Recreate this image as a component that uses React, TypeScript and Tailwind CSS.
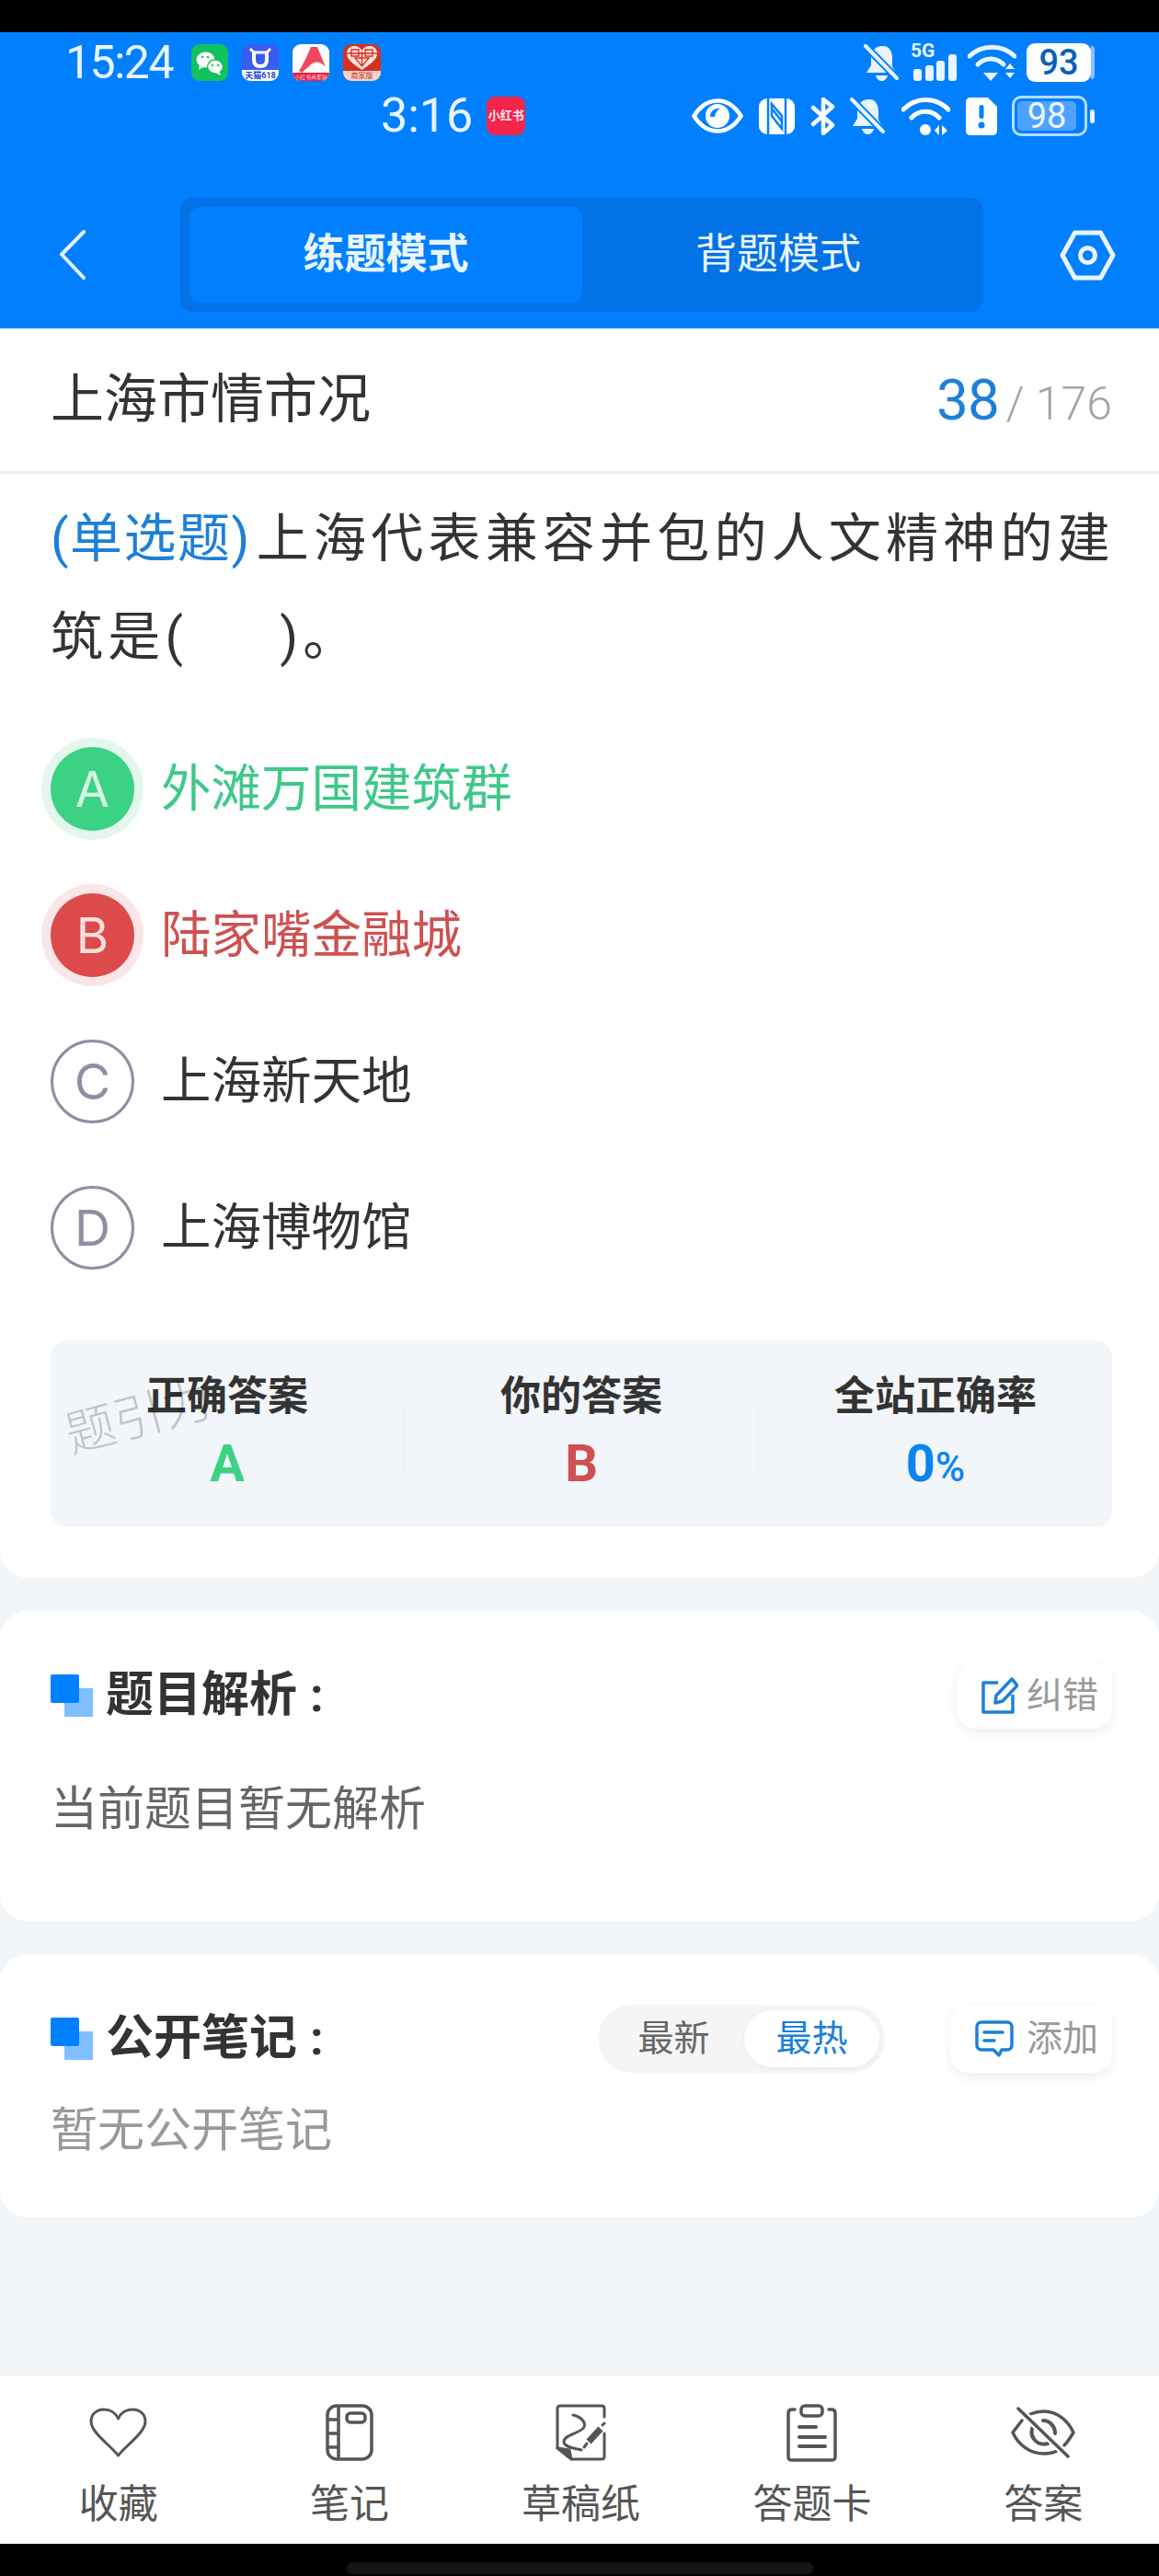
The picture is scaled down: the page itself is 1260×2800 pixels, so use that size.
const Back = () => (
  <svg width="30" height="54" viewBox="0 0 30 54" fill="none" stroke="#e6f3ff" strokeWidth="4" strokeLinecap="round" strokeLinejoin="round">
    <path d="M27 2 L3 26.5 L27 52" />
  </svg>
);

const Hex = () => (
  <svg width="61" height="55" viewBox="0 0 61 55" fill="none" stroke="#eaf5ff" strokeWidth="5" strokeLinejoin="round">
    <path d="M3 27.5 L16.5 3 H44.5 L58 27.5 L44.5 52 H16.5 Z" />
    <circle cx="30.5" cy="27.5" r="8" />
  </svg>
);

const BellOff = () => (
  <svg width="38" height="41" viewBox="0 0 38 41" fill="none">
    <path d="M21 2 C12 2 8 8 8 15 V23 L3 31 H35 L31 24 V15 C31 8 28 2 21 2 Z" fill="#eaf4ff" />
    <path d="M13 34 H26 C25 38 22 40 19.500 40 C17 40 14 38 13 34 Z" fill="#eaf4ff" />
    <path d="M1 1 L37 38" stroke="#0080ff" strokeWidth="8" />
    <path d="M2 2 L36 37" stroke="#eaf4ff" strokeWidth="4" strokeLinecap="round" />
  </svg>
);

const Signal = () => (
  <div className="relative w-[50px] h-[42px]">
    <span className="absolute left-0 top-[-3px] text-[21px] leading-[22px] font-bold text-[#e8f4ff]">5G</span>
    <svg className="absolute left-0 top-0" width="50" height="42" viewBox="0 0 50 42" fill="#e8f4ff">
      <rect x="3" y="28" width="9" height="13" rx="3" />
      <rect x="16" y="24" width="9" height="17" rx="3" />
      <rect x="28" y="19" width="9" height="22" rx="3" />
      <rect x="41" y="12" width="9" height="29" rx="3" />
    </svg>
  </div>
);

const WifiOne = () => (
  <svg width="53" height="41" viewBox="0 0 53 41" fill="none" stroke="#eaf5ff" strokeWidth="5" strokeLinecap="round">
    <path d="M2 13 C16 0 37 0 51 13" />
    <path d="M11 22 C19 14 31 14 39 22" />
    <path d="M17 31 H33 L25 40 Z" fill="#eaf5ff" stroke="none" />
    <path d="M41 27 L46 21 L51 27 Z M41 31 H51 L46 37 Z" fill="#eaf5ff" stroke="none" />
  </svg>
);

const WifiTwo = () => (
  <svg width="53" height="43" viewBox="0 0 53 43" fill="none" stroke="#ffffff" strokeWidth="5" strokeLinecap="round">
    <path d="M2 14 C16 0 37 0 51 14" />
    <path d="M11 23 C19 14 33 14 41 23" />
    <circle cx="26" cy="36" r="6" fill="#ffffff" stroke="none" />
    <path d="M36 37 L41 31 V42 Z M44 31 L50 37 L44 42 Z" fill="#ffffff" stroke="none" />
  </svg>
);

const Eye = () => (
  <svg width="56" height="38" viewBox="0 0 56 38" fill="none">
    <path d="M2.500 19 C10 7 18 2.500 28 2.500 C38 2.500 46 7 53.500 19 C46 31 38 35.500 28 35.500 C18 35.500 10 31 2.500 19 Z" stroke="#fff" strokeWidth="4.500" />
    <circle cx="28" cy="19" r="13" fill="#fff" />
    <path d="M20 20 C20 14 25 10 31 11 C27 13 26 16 25 20 Z" fill="#0080ff" />
  </svg>
);

const Nfc = () => (
  <svg width="39" height="39" viewBox="0 0 39 39">
    <rect x="0" y="0" width="39" height="39" rx="9" fill="#fff" />
    <path d="M10 -1 V40" stroke="#0080ff" strokeWidth="2.500" />
    <path d="M29 -1 V40" stroke="#0080ff" strokeWidth="2.500" />
    <path d="M14 6 L25 19 V33 L14 19 Z" fill="none" stroke="#0080ff" strokeWidth="2.500" />
    <path d="M15 12 L25 25" stroke="#0080ff" strokeWidth="2.500" />
  </svg>
);

const Bluetooth = () => (
  <svg width="27" height="42" viewBox="0 0 27 42" fill="none" stroke="#fff" strokeWidth="4.500" strokeLinecap="round" strokeLinejoin="round">
    <path d="M3 12 L24 31 L14 40 V3 L24 11 L3 30" />
  </svg>
);

const Sim = () => (
  <svg width="34" height="41" viewBox="0 0 34 41">
    <path d="M5 0 H24 L34 10 V36 C34 39 32 41 29 41 H5 C2 41 0 39 0 36 V5 C0 2 2 0 5 0 Z" fill="#fff" />
    <rect x="14.500" y="8" width="5" height="15" rx="2.500" fill="#0080ff" />
    <circle cx="17" cy="30" r="3.500" fill="#0080ff" />
  </svg>
);

const WeChat = () => (
  <div className="w-[40px] h-[40px] rounded-[9px] bg-[#10c35f] overflow-hidden">
    <svg width="40" height="40" viewBox="0 0 40 40" fill="#fff">
      <ellipse cx="15.500" cy="17" rx="10" ry="8.500" />
      <path d="M9 22 L8 28 L14 24 Z" />
      <ellipse cx="26" cy="24.500" rx="8.500" ry="7.500" stroke="#10c35f" strokeWidth="1.500" />
      <path d="M30 29 L32 34 L26 31 Z" />
      <circle cx="12" cy="14" r="1.300" fill="#10c35f" />
      <circle cx="18" cy="14" r="1.300" fill="#10c35f" />
      <circle cx="23" cy="23" r="1.200" fill="#10c35f" />
      <circle cx="29" cy="23" r="1.200" fill="#10c35f" />
    </svg>
  </div>
);

const Tmall = () => (
  <div className="w-[40px] h-[40px] rounded-[9px] bg-[#3a5cf0] overflow-hidden flex flex-col">
    <svg className="flex-1" width="40" height="28" viewBox="0 0 40 28" fill="none" stroke="#fff">
      <path d="M13 9 V17 C13 22 16 24 20 24 C24 24 27 22 27 17 V9" strokeWidth="4" />
      <path d="M9 5 L13 9 H27 L31 5" strokeWidth="3" />
    </svg>
    <div className="h-[12px] bg-white text-[9px] leading-[12px] font-bold text-center text-[#2343c8] whitespace-nowrap">天猫618</div>
  </div>
);

const Acrobat = () => (
  <div className="w-[40px] h-[40px] rounded-[9px] bg-white overflow-hidden flex flex-col">
    <svg width="40" height="31" viewBox="0 0 40 31">
      <path d="M20 3 L27 3 L36 25 C30 18 24 18 19 23 L10 31 L7 29 C12 22 16 12 20 3 Z" fill="#f0485e" />
    </svg>
    <div className="h-[9px] bg-[#e8203f] text-[6px] leading-[9px] text-center text-[#ffd9de] whitespace-nowrap">小红书商家版</div>
  </div>
);

const Pdd = () => (
  <div className="w-[41px] h-[40px] rounded-[9px] bg-[#d8301f] overflow-hidden flex flex-col">
    <svg width="41" height="29" viewBox="0 0 41 29" fill="none" stroke="#ffe4dc" strokeWidth="1.400">
      <path d="M20.500 28 C12 22 4 17 4 10 C4 5 8 2 12 2 C16 2 19 4 20.500 7 C22 4 25 2 29 2 C33 2 37 5 37 10 C37 17 29 22 20.500 28 Z" fill="#ffe4dc" stroke="none" />
      <path d="M9 6 H17 V13 H9 Z M24 6 H32 V13 H24 Z M13 15 H28 L20.500 24 Z M20.500 8 V24 M4 10 H37" stroke="#d8301f" />
    </svg>
    <div className="h-[11px] bg-[#f6d2cc] text-[8px] leading-[11px] text-center text-[#b83325] whitespace-nowrap">商家版</div>
  </div>
);

const Red = () => (
  <div className="w-[42px] h-[42px] rounded-[9px] bg-[#f4254a] flex items-center justify-center text-[13px] font-bold text-[#ffe9ec] whitespace-nowrap">
    小红书
  </div>
);

const SectionMark = () => (
  <div className="relative w-[46px] h-[46px] mr-[14px]">
    <div className="absolute right-0 bottom-0 w-[31px] h-[31px] bg-[#80bfff]" />
    <div className="absolute left-0 top-0 w-[31px] h-[31px] rounded-[2px] bg-[#0080ff]" />
  </div>
);

const EditIcon = () => (
  <svg width="40" height="40" viewBox="0 0 40 40" fill="none" stroke="#1c80d8" strokeWidth="3.500" strokeLinejoin="round">
    <path d="M18 6 H2 V38 H34 V19" />
    <path d="M33 2 L39 9 L23 26 L15 28 L16 20 Z" />
  </svg>
);

const ChatIcon = () => (
  <svg width="42" height="40" viewBox="0 0 42 40" fill="none" stroke="#1c80d8" strokeWidth="3.500" strokeLinecap="round" strokeLinejoin="round">
    <path d="M7 2 H35 C38 2 40 4 40 7 V27 C40 30 38 32 35 32 H29 L26 38 L20 32 H7 C4 32 2 30 2 27 V7 C2 4 4 2 7 2 Z" />
    <path d="M10 13 H30 M10 22 H21" />
  </svg>
);

const Heart = () => (
  <svg width="63" height="54" viewBox="0 0 63 54" fill="none" stroke="#555" strokeWidth="3" strokeLinejoin="round">
    <path d="M31.500 52 C22 40 2 27 2 15 C2 7 8 2 16 2 C23 2 29 6 31.500 12 C34 6 40 2 47 2 C55 2 61 7 61 15 C61 27 41 40 31.500 52 Z" />
  </svg>
);

const Notebook = () => (
  <svg width="52" height="62" viewBox="0 0 52 62" fill="none" stroke="#555" strokeWidth="3.500" strokeLinejoin="round">
    <rect x="2" y="2" width="48" height="58" rx="10" />
    <path d="M14 2 V60 M2 17 H14 M2 32 H14 M2 47 H14" />
    <rect x="23" y="10" width="20" height="10" rx="4" />
  </svg>
);

const Draft = () => (
  <svg width="55" height="62" viewBox="0 0 55 62" fill="none" stroke="#555" strokeWidth="3" strokeLinecap="round" strokeLinejoin="round">
    <path d="M2 48 V5 C2 3 3 2 5 2 H50 C52 2 53 3 53 5 V14" />
    <path d="M53 32 V57 C53 59 52 60 50 60 H18" />
    <path d="M2 48 L15 50 L17 60 Z" fill="#555" />
    <path d="M19 12 C28 14 33 20 31 25 C28 32 9 33 9 41 C9 47 20 48 28 50" />
    <path d="M36 41 L49 27" strokeWidth="7" strokeLinecap="butt" />
    <path d="M31 47 L34 43" strokeWidth="3" />
    <path d="M51 23 L53 21" strokeWidth="3" />
  </svg>
);

const Clipboard = () => (
  <svg width="55" height="63" viewBox="0 0 55 63" fill="none" stroke="#555" strokeWidth="3.500" strokeLinecap="round" strokeLinejoin="round">
    <rect x="16" y="2" width="23" height="11" rx="4" />
    <path d="M9 6 H6 C3 6 2 8 2 10 V57 C2 60 3 61 6 61 H49 C52 61 53 60 53 57 V10 C53 8 52 6 49 6 H46" />
    <path d="M14 25 H32 M14 36 H42 M14 46 H42" strokeWidth="4" />
  </svg>
);

const EyeOff = () => (
  <svg width="70" height="56" viewBox="0 0 70 56" fill="none" stroke="#555" strokeWidth="3.500" strokeLinecap="round" strokeLinejoin="round">
    <path d="M12 15 L2 28 C8 41 20 51 36 51 C42 51 47 50 52 47" />
    <path d="M21 8 C26 6 31 5 36 5 C50 5 62 15 68 28 C65 33 62 38 58 42" />
    <path d="M27 18 C22 22 21 30 25 35 C29 41 37 42 42 39" strokeWidth="4" />
    <path d="M35 15 C42 15 48 21 48 29" strokeWidth="4" />
    <path d="M8 2 L62 54" stroke="#fff" strokeWidth="8" />
    <path d="M8 2 L62 54" />
  </svg>
);

const options = [
  { key: "A", text: "外滩万国建筑群", tone: "right" },
  { key: "B", text: "陆家嘴金融城", tone: "wrong" },
  { key: "C", text: "上海新天地", tone: "none" },
  { key: "D", text: "上海博物馆", tone: "none" },
];

const OptionRow = ({ item }: { item: (typeof options)[number] }) => {
  let circle = "border-[3px] border-[#8d8fa3] text-[#8d8fa3]";
  let label = "text-[#333333]";
  if (item.tone === "right") {
    circle = "bg-[#3bd283] text-[#d6f7e5] ring-[10px] ring-[#e4f7ec]";
    label = "text-[#3ec887]";
  }
  if (item.tone === "wrong") {
    circle = "bg-[#dd4a4c] text-[#fbdede] ring-[10px] ring-[#f9e6e6]";
    label = "text-[#cf5050]";
  }
  return (
    <div className="h-[159px] flex items-center">
      <div className={`w-[91px] h-[91px] rounded-full flex items-center justify-center text-[54px] font-['Inter',sans-serif] font-normal shrink-0 ${circle}`}>
        {item.key}
      </div>
      <div className={`ml-[29px] text-[54.500px] ${label}`}>{item.text}</div>
    </div>
  );
};

const Stat = ({ title, children }: { title: string; children: React.ReactNode }) => (
  <div className="flex-1 flex flex-col items-center">
    <div className="text-[44px] leading-[60px] font-bold text-[#333333]">{title}</div>
    {children}
  </div>
);

const tabs = [
  { label: "收藏", icon: <Heart /> },
  { label: "笔记", icon: <Notebook /> },
  { label: "草稿纸", icon: <Draft /> },
  { label: "答题卡", icon: <Clipboard /> },
  { label: "答案", icon: <EyeOff /> },
];

export default function App() {
  return (
    <div className="w-[1260px] h-[2800px] flex flex-col bg-[#f2f6f9] font-['Roboto','Noto_Sans_CJK_SC',sans-serif] overflow-hidden">
      <div className="h-[35px] bg-black shrink-0" />

      {/* blue header with both status bars */}
      <header className="h-[322px] shrink-0 bg-[#0080ff] pt-[12px]">
        <div className="h-[42px] flex items-center pl-[71px] pr-[70px]">
          <div className="w-[137px] text-[50px] leading-[42px] tracking-[-1.500px] text-[#eaf6ff]">15:24</div>
          <div className="flex items-center gap-[15px]">
            <WeChat />
            <Tmall />
            <Acrobat />
            <Pdd />
          </div>
          <div className="ml-auto flex items-center">
            <BellOff />
            <div className="ml-[13px]">
              <Signal />
            </div>
            <div className="ml-[12px]">
              <WifiOne />
            </div>
            <div className="ml-[11px] flex items-center">
              <div className="w-[70px] h-[42px] rounded-[9px] bg-white flex items-center justify-center text-[38px] font-medium text-[#0a5ebd]">
                93
              </div>
              <div className="w-[4px] h-[36px] rounded-r-[4px] bg-[#8cc4ff]" />
            </div>
          </div>
        </div>

        <div className="mt-[15px] h-[44px] flex items-center pl-[414px] pr-[70px]">
          <div className="text-[52px] leading-[44px] text-[#eaf6ff]">3:16</div>
          <div className="ml-[15px]">
            <Red />
          </div>
          <div className="ml-auto flex items-center">
            <Eye />
            <div className="ml-[17px]">
              <Nfc />
            </div>
            <div className="ml-[17px]">
              <Bluetooth />
            </div>
            <div className="ml-[16px]">
              <BellOff />
            </div>
            <div className="ml-[18px]">
              <WifiTwo />
            </div>
            <div className="ml-[17px]">
              <Sim />
            </div>
            <div className="ml-[16px] flex items-center">
              <div className="w-[82px] h-[44px] rounded-[10px] border-[3px] border-[#b5dcff] p-[3px]">
                <div className="w-[64px] h-full rounded-[5px] bg-[#4da3ff] flex items-center justify-center text-[38px] text-[#eef7ff]">
                  98
                </div>
              </div>
              <div className="ml-[3px] w-[5px] h-[15px] rounded-[3px] bg-[#eaf5ff]" />
            </div>
          </div>
        </div>

        <div className="mt-[67px] h-[124px] flex items-center pl-[64px] pr-[47px]">
          <Back />
          <div className="ml-[102px] w-[873px] h-[124px] rounded-[14px] bg-[#0272e6] p-[10px] flex">
            <div className="w-[427px] rounded-[12px] bg-[#0080ff] flex items-center justify-center text-[45px] font-bold text-[#eaf6ff]">
              练题模式
            </div>
            <div className="flex-1 flex items-center justify-center text-[45px] text-[#eaf6ff]">
              背题模式
            </div>
          </div>
          <div className="ml-auto">
            <Hex />
          </div>
        </div>
      </header>

      {/* question card */}
      <section className="h-[1358px] shrink-0 bg-white rounded-b-[30px]">
        <div className="h-[158px] pl-[55px] pr-[51px] flex items-center justify-between border-b-[3px] border-[#ececec]">
          <div className="text-[58px] text-[#333333]">上海市情市况</div>
          <div className="flex items-baseline">
            <span className="text-[62px] tracking-[-1px] text-[#1c80d8]">38</span>
            <span className="ml-[8px] text-[50px] font-light text-[#a3a3a3]">/ 176</span>
          </div>
        </div>

        <div className="pl-[55px] pr-[40px]">
          <div className="mt-[17px] text-[57px] leading-[107px] tracking-[5.200px] text-[#333333]">
            <span className="mr-[6px] tracking-[1.500px] text-[#1c80d8]">(单选题)</span>
            上海代表兼容并包的人文精神的建筑是(<span className="inline-block w-[100px]" />)。
          </div>

          <div className="mt-[32px]">
            {options.map((item) => (
              <OptionRow key={item.key} item={item} />
            ))}
          </div>

          <div className="relative mt-[43px] mr-[11px] h-[203px] rounded-[18px] bg-[#f2f5f9] pt-[31px] flex items-start">
            <Stat title="正确答案">
              <div className="mt-[13px] text-[56px] leading-[60px] font-bold text-[#3bd283]">A</div>
            </Stat>
            <div className="w-px h-[75px] mt-[40px] bg-[#e9edf1]" />
            <Stat title="你的答案">
              <div className="mt-[13px] text-[56px] leading-[60px] font-bold text-[#cf5050]">B</div>
            </Stat>
            <div className="w-px h-[75px] mt-[40px] bg-[#e9edf1]" />
            <Stat title="全站正确率">
              <div className="mt-[13px] text-[56px] leading-[60px] font-bold text-[#0a84f0]">
                0<span className="text-[44px] font-medium">%</span>
              </div>
            </Stat>
            <div className="absolute left-[15px] top-[54px] text-[54px] leading-[60px] font-light text-[#00000033] -rotate-[15deg] whitespace-nowrap">
              题引力
            </div>
          </div>
        </div>
      </section>

      {/* analysis */}
      <section className="mt-[36px] h-[337px] shrink-0 bg-white rounded-[30px] pl-[55px] pr-[51px] pt-[56px]">
        <div className="h-[72px] flex items-center">
          <SectionMark />
          <div className="text-[52px] font-bold text-[#333333]">
            题目解析<span className="ml-[14px]">:</span>
          </div>
          <div className="ml-auto w-[168px] h-[72px] rounded-[20px] bg-white shadow-[0_4px_14px_rgba(0,0,0,0.07)] flex items-center pl-[26px]">
            <EditIcon />
            <span className="ml-[9px] text-[39px] text-[#999999]">纠错</span>
          </div>
        </div>
        <div className="mt-[53px] text-[51px] leading-[70px] text-[#666666]">当前题目暂无解析</div>
      </section>

      {/* public notes */}
      <section className="mt-[36px] h-[286px] shrink-0 bg-white rounded-[30px] pl-[55px] pr-[51px] pt-[55px]">
        <div className="h-[74px] flex items-center">
          <SectionMark />
          <div className="text-[52px] font-bold text-[#333333]">
            公开笔记<span className="ml-[14px]">:</span>
          </div>
          <div className="ml-auto w-[312px] h-[74px] rounded-full bg-[#f5f5f6] flex items-center p-[6px]">
            <div className="w-[153px] text-center text-[39px] text-[#666666]">最新</div>
            <div className="flex-1 h-full rounded-full bg-white shadow-[0_1px_6px_rgba(0,0,0,0.05)] flex items-center justify-center text-[39px] text-[#1c80d8]">
              最热
            </div>
          </div>
          <div className="ml-[71px] w-[176px] h-[73px] rounded-[20px] bg-white shadow-[0_4px_14px_rgba(0,0,0,0.07)] flex items-center pl-[27px]">
            <ChatIcon />
            <span className="ml-[14px] text-[39px] text-[#999999]">添加</span>
          </div>
        </div>
        <div className="mt-[28px] text-[51px] leading-[70px] text-[#999999]">暂无公开笔记</div>
      </section>

      <div className="flex-1" />

      {/* bottom tabs */}
      <nav className="h-[182px] shrink-0 bg-white grid grid-cols-5 pl-[3px] pt-[28px]">
        {tabs.map((tab) => (
          <div key={tab.label} className="flex flex-col items-center">
            <div className="h-[66px] flex items-center justify-center">{tab.icon}</div>
            <div className="mt-[20px] text-[43px] leading-[50px] text-[#555555]">{tab.label}</div>
          </div>
        ))}
      </nav>

      <div className="h-[35px] shrink-0 bg-black flex justify-center pt-[20px]">
        <div className="w-[507px] h-[13px] rounded-[6px] bg-[#141414]" />
      </div>
    </div>
  );
}
